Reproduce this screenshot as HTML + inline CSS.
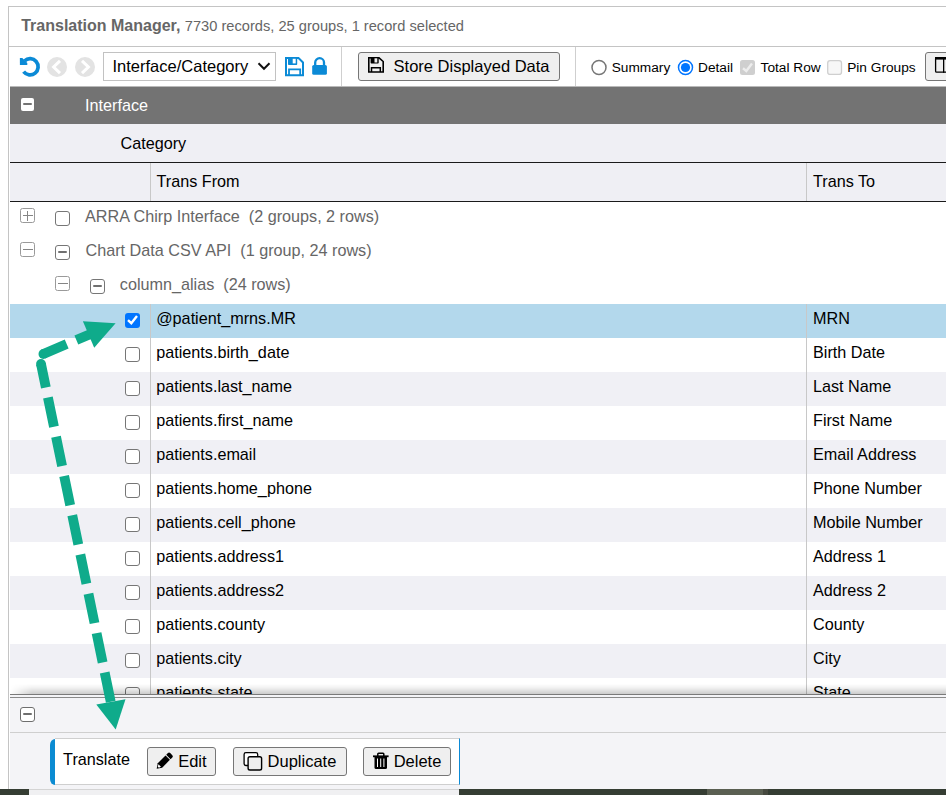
<!DOCTYPE html>
<html><head><meta charset="utf-8">
<style>
*{box-sizing:border-box;margin:0;padding:0}
html,body{width:946px;height:795px;overflow:hidden;background:#fff;font-family:"Liberation Sans",sans-serif;color:#000}
.a{position:absolute}
.t{white-space:pre;line-height:1}
.frame{left:8px;top:6px;width:1000px;height:800px;border-left:1px solid #c4c4c4;border-top:1px solid #c4c4c4}
.title{left:9px;top:7px;width:1000px;height:40px;border-bottom:1px solid #c4c4c4}
.hdr{left:10px;top:86px;width:940px;height:38px;background:#737373;border-top:1px solid #b9b9b9}
.cat{left:10px;top:124px;width:940px;height:38px;background:#efeff4}
.colh{left:10px;top:162px;width:940px;height:40px;background:#efeff4;border-top:1px solid #1a1a1a;border-bottom:1px solid #1a1a1a}
.row{left:10px;width:940px;height:34px}
.sel{background:#b3d8ec}
.alt{background:#f0f0f5}
.vd{width:1px;background:#c8c8c8}
.cb{width:15px;height:15px;border:1.5px solid #767676;border-radius:3px;background:#fff}
.cbc{width:15px;height:15px;border-radius:3px;background:#0075ff}
.tog{width:15px;height:15px;border:1px solid #9a9a9a;border-radius:2.5px}
.btn{border:1px solid #767676;border-radius:3px;background:#efefef}
.sep{width:1px;background:#cfcfcf}
</style></head><body>
<div class="a frame"></div>
<div class="a title"></div>
<div class="a t" style="left:21.2px;top:17.5px;font-size:16px;color:#666"><b>Translation Manager,</b> <span style="font-size:14.65px">7730 records, 25 groups, 1 record selected</span></div>
<svg class="a" style="left:0;top:0" width="946" height="90">
<path d="M23.6 71.7 A8.1 8.1 0 1 0 24.58 60.78" fill="none" stroke="#0b8ad6" stroke-width="3.7"/>
<path d="M19.9 57.9 L22.3 57.9 L27.3 63 L27.3 64.9 L19.9 64.9 Z" fill="#0b8ad6"/>
<circle cx="57" cy="67" r="10" fill="#e3e3e3"/>
<path d="M60 60.8 L53.6 67 L60 73.2" fill="none" stroke="#fff" stroke-width="3"/>
<circle cx="85" cy="67" r="10" fill="#e3e3e3"/>
<path d="M82 60.8 L88.4 67 L82 73.2" fill="none" stroke="#fff" stroke-width="3"/>
<!-- blue floppy -->
<path d="M286 58 H298.5 L303 62.5 V75.2 H286 Z" fill="none" stroke="#0b8ad6" stroke-width="2"/>
<rect x="288" y="58" width="9.2" height="7" rx="0.8" fill="#0b8ad6"/>
<rect x="292.7" y="58.8" width="3" height="4.6" fill="#fff"/>
<path d="M289 75.2 V69.3 H300.2 V75.2" fill="none" stroke="#0b8ad6" stroke-width="1.8"/>
<!-- lock -->
<path d="M315.2 65 V62.6 A4.4 4.4 0 0 1 324 62.6 V65" fill="none" stroke="#0b8ad6" stroke-width="2.3"/>
<rect x="312.2" y="64.9" width="14.7" height="9.9" rx="1.6" fill="#0b8ad6"/>
</svg>
<div class="a" style="left:103px;top:52px;width:173px;height:29px;border:1px solid #c2c2c2;background:#fff"></div>
<div class="a t" style="left:112.5px;top:57.72px;font-size:16.5px;">Interface/Category</div>
<svg class="a" style="left:255px;top:60px" width="16" height="12"><path d="M3.5 3.3 L9 8.8 L14.5 3.3" fill="none" stroke="#111" stroke-width="2"/></svg>
<div class="a sep" style="left:341px;top:47px;height:39px"></div>
<div class="a btn" style="left:358px;top:52px;width:202px;height:29px"></div>
<svg class="a" style="left:0;top:0" width="946" height="90">
<path d="M368.8 57.8 H379 L383.2 61.5 V72 H368.8 Z" fill="none" stroke="#000" stroke-width="1.6"/>
<rect x="370.6" y="57.5" width="8.1" height="6" rx="0.8" fill="#000"/>
<rect x="374.5" y="58.3" width="2.8" height="4.2" fill="#efefef"/>
<path d="M371.5 72 V67.8 H380.3 V72" fill="none" stroke="#000" stroke-width="1.5"/>
</svg>
<div class="a t" style="left:393.6px;top:57.72px;font-size:16.5px;">Store Displayed Data</div>
<div class="a sep" style="left:575px;top:47px;height:39px"></div>
<svg class="a" style="left:0;top:0" width="946" height="90">
<circle cx="599" cy="67.5" r="7" fill="#fff" stroke="#767676" stroke-width="1.5"/>
<circle cx="685.5" cy="67.5" r="7" fill="#fff" stroke="#0075ff" stroke-width="1.5"/>
<circle cx="685.5" cy="67.5" r="4.6" fill="#0075ff"/>
<rect x="740" y="60" width="15" height="15" rx="2.5" fill="#cfcfcf"/>
<path d="M743 68.3 L746.3 71 L752 63.5" fill="none" stroke="#ededed" stroke-width="2.4"/>
<rect x="827.7" y="60.6" width="13.8" height="13.8" rx="2.5" fill="#f7f7f7" stroke="#cfcfcf" stroke-width="1.3"/>
</svg>
<div class="a t" style="left:611.7px;top:61.30px;font-size:13.7px;">Summary</div>
<div class="a t" style="left:698px;top:61.30px;font-size:13.7px;">Detail</div>
<div class="a t" style="left:760.6px;top:61.30px;font-size:13.7px;">Total Row</div>
<div class="a t" style="left:847.2px;top:61.30px;font-size:13.7px;">Pin Groups</div>
<div class="a btn" style="left:925px;top:52px;width:60px;height:29px"></div>
<svg class="a" style="left:0;top:0" width="946" height="90"><rect x="935.6" y="57.6" width="20" height="14.6" rx="1" fill="none" stroke="#000" stroke-width="1.3"/><rect x="935" y="57" width="20" height="2.6" fill="#000"/><rect x="943" y="57" width="1.3" height="15.8" fill="#000"/></svg>
<div class="a hdr"></div>
<div class="a cat"></div>
<div class="a colh"></div>
<div class="a vd" style="left:150px;top:163px;height:38px"></div>
<div class="a vd" style="left:806px;top:163px;height:38px"></div>
<div class="a" style="left:21px;top:98px;width:13px;height:13px;background:#fff;border-radius:2px"><div class="a" style="left:2px;top:5.4px;width:9px;height:2px;border-radius:1px;background:#737373"></div></div>
<div class="a t" style="left:85px;top:97.48px;font-size:16.2px;color:#fff;">Interface</div>
<div class="a t" style="left:120.5px;top:135.48px;font-size:16.2px;">Category</div>
<div class="a t" style="left:156.5px;top:173.28px;font-size:16.2px;">Trans From</div>
<div class="a t" style="left:813px;top:173.28px;font-size:16.2px;">Trans To</div>
<div class="a tog" style="left:20px;top:208px"><div class="a" style="left:1.6px;top:5.9px;width:10px;height:1.3px;background:#858585"></div><div class="a" style="left:6px;top:2px;width:1.3px;height:9.5px;background:#858585"></div></div>
<div class="a cb" style="left:55px;top:211px"></div>
<div class="a t" style="left:85px;top:208.08px;font-size:16.2px;color:#666;">ARRA Chirp Interface  (2 groups, 2 rows)</div>
<div class="a tog" style="left:20px;top:242px"><div class="a" style="left:1.6px;top:5.9px;width:10px;height:1.3px;background:#858585"></div></div>
<div class="a cb" style="left:55px;top:245px"><div class="a" style="left:1.6px;top:5.3px;width:9px;height:2.2px;border-radius:1.1px;background:#707070"></div></div>
<div class="a t" style="left:85.5px;top:242.08px;font-size:16.2px;color:#666;">Chart Data CSV API  (1 group, 24 rows)</div>
<div class="a tog" style="left:55px;top:276px"><div class="a" style="left:1.6px;top:5.9px;width:10px;height:1.3px;background:#858585"></div></div>
<div class="a cb" style="left:90px;top:279px"><div class="a" style="left:1.6px;top:5.3px;width:9px;height:2.2px;border-radius:1.1px;background:#707070"></div></div>
<div class="a t" style="left:119.8px;top:276.08px;font-size:16.2px;color:#666;">column_alias  (24 rows)</div>
<div class="a row sel" style="top:304px"></div>
<div class="a vd" style="left:150px;top:304px;height:34px"></div>
<div class="a vd" style="left:806px;top:304px;height:34px"></div>
<div class="a cbc" style="left:125px;top:313px"><svg class="a" style="left:0;top:0" width="15" height="15" viewBox="0 0 15 15"><path d="M3 7.2 L6.3 10.2 L12 3" fill="none" stroke="#fff" stroke-width="2.4" stroke-linecap="butt" stroke-linejoin="miter"/></svg></div>
<div class="a t" style="left:156.2px;top:310.08px;font-size:16.2px;">@patient_mrns.MR</div>
<div class="a t" style="left:813px;top:310.08px;font-size:16.2px;">MRN</div>
<div class="a row " style="top:338px"></div>
<div class="a vd" style="left:150px;top:338px;height:34px"></div>
<div class="a vd" style="left:806px;top:338px;height:34px"></div>
<div class="a cb" style="left:125px;top:347px"></div>
<div class="a t" style="left:156.2px;top:344.08px;font-size:16.2px;">patients.birth_date</div>
<div class="a t" style="left:813px;top:344.08px;font-size:16.2px;">Birth Date</div>
<div class="a row alt" style="top:372px"></div>
<div class="a vd" style="left:150px;top:372px;height:34px"></div>
<div class="a vd" style="left:806px;top:372px;height:34px"></div>
<div class="a cb" style="left:125px;top:381px"></div>
<div class="a t" style="left:156.2px;top:378.08px;font-size:16.2px;">patients.last_name</div>
<div class="a t" style="left:813px;top:378.08px;font-size:16.2px;">Last Name</div>
<div class="a row " style="top:406px"></div>
<div class="a vd" style="left:150px;top:406px;height:34px"></div>
<div class="a vd" style="left:806px;top:406px;height:34px"></div>
<div class="a cb" style="left:125px;top:415px"></div>
<div class="a t" style="left:156.2px;top:412.08px;font-size:16.2px;">patients.first_name</div>
<div class="a t" style="left:813px;top:412.08px;font-size:16.2px;">First Name</div>
<div class="a row alt" style="top:440px"></div>
<div class="a vd" style="left:150px;top:440px;height:34px"></div>
<div class="a vd" style="left:806px;top:440px;height:34px"></div>
<div class="a cb" style="left:125px;top:449px"></div>
<div class="a t" style="left:156.2px;top:446.08px;font-size:16.2px;">patients.email</div>
<div class="a t" style="left:813px;top:446.08px;font-size:16.2px;">Email Address</div>
<div class="a row " style="top:474px"></div>
<div class="a vd" style="left:150px;top:474px;height:34px"></div>
<div class="a vd" style="left:806px;top:474px;height:34px"></div>
<div class="a cb" style="left:125px;top:483px"></div>
<div class="a t" style="left:156.2px;top:480.08px;font-size:16.2px;">patients.home_phone</div>
<div class="a t" style="left:813px;top:480.08px;font-size:16.2px;">Phone Number</div>
<div class="a row alt" style="top:508px"></div>
<div class="a vd" style="left:150px;top:508px;height:34px"></div>
<div class="a vd" style="left:806px;top:508px;height:34px"></div>
<div class="a cb" style="left:125px;top:517px"></div>
<div class="a t" style="left:156.2px;top:514.08px;font-size:16.2px;">patients.cell_phone</div>
<div class="a t" style="left:813px;top:514.08px;font-size:16.2px;">Mobile Number</div>
<div class="a row " style="top:542px"></div>
<div class="a vd" style="left:150px;top:542px;height:34px"></div>
<div class="a vd" style="left:806px;top:542px;height:34px"></div>
<div class="a cb" style="left:125px;top:551px"></div>
<div class="a t" style="left:156.2px;top:548.08px;font-size:16.2px;">patients.address1</div>
<div class="a t" style="left:813px;top:548.08px;font-size:16.2px;">Address 1</div>
<div class="a row alt" style="top:576px"></div>
<div class="a vd" style="left:150px;top:576px;height:34px"></div>
<div class="a vd" style="left:806px;top:576px;height:34px"></div>
<div class="a cb" style="left:125px;top:585px"></div>
<div class="a t" style="left:156.2px;top:582.08px;font-size:16.2px;">patients.address2</div>
<div class="a t" style="left:813px;top:582.08px;font-size:16.2px;">Address 2</div>
<div class="a row " style="top:610px"></div>
<div class="a vd" style="left:150px;top:610px;height:34px"></div>
<div class="a vd" style="left:806px;top:610px;height:34px"></div>
<div class="a cb" style="left:125px;top:619px"></div>
<div class="a t" style="left:156.2px;top:616.08px;font-size:16.2px;">patients.county</div>
<div class="a t" style="left:813px;top:616.08px;font-size:16.2px;">County</div>
<div class="a row alt" style="top:644px"></div>
<div class="a vd" style="left:150px;top:644px;height:34px"></div>
<div class="a vd" style="left:806px;top:644px;height:34px"></div>
<div class="a cb" style="left:125px;top:653px"></div>
<div class="a t" style="left:156.2px;top:650.08px;font-size:16.2px;">patients.city</div>
<div class="a t" style="left:813px;top:650.08px;font-size:16.2px;">City</div>
<div class="a row " style="top:678px"></div>
<div class="a vd" style="left:150px;top:678px;height:34px"></div>
<div class="a vd" style="left:806px;top:678px;height:34px"></div>
<div class="a cb" style="left:125px;top:687px"></div>
<div class="a t" style="left:156.2px;top:684.08px;font-size:16.2px;">patients.state</div>
<div class="a t" style="left:813px;top:684.08px;font-size:16.2px;">State</div>
<div class="a" style="left:10px;top:684px;width:940px;height:10px;background:linear-gradient(rgba(0,0,0,0),rgba(0,0,0,0.06) 40%,rgba(0,0,0,0.2));-webkit-mask-image:linear-gradient(to right,transparent,#000 22px)"></div>
<div class="a" style="left:10px;top:694px;width:940px;height:95px;background:#f4f4f7;border-top:1px solid #7a7a7a"></div>
<div class="a" style="left:10px;top:697px;width:940px;height:1px;background:#8a8a8a"></div>
<div class="a" style="left:20px;top:707px;width:15px;height:15px;border:1.5px solid #6e6e6e;border-radius:3px;background:#fff"><div class="a" style="left:2.2px;top:5.4px;width:8.8px;height:2px;border-radius:1px;background:#6e6e6e"></div></div>
<div class="a" style="left:10px;top:732px;width:940px;height:1px;background:#cfcfcf"></div>
<div class="a" style="left:55px;top:738px;width:405px;height:47px;background:#fff;border:1px solid #cfcfcf;border-left:none;border-right:1px solid #0b8ad6"></div><div class="a" style="left:50px;top:738.5px;width:5px;height:46px;background:#0b8bd2;border-radius:5px 0 0 5px / 6px 0 0 6px"></div>
<div class="a t" style="left:63.1px;top:751.18px;font-size:16.2px;">Translate</div>
<div class="a btn" style="left:147px;top:747px;width:69px;height:29px"></div>
<div class="a btn" style="left:233px;top:747px;width:114px;height:28.5px"></div>
<div class="a btn" style="left:363px;top:747px;width:88px;height:28.5px"></div>
<div class="a t" style="left:178.2px;top:753.02px;font-size:16.5px;">Edit</div>
<div class="a t" style="left:267.6px;top:753.02px;font-size:16.5px;">Duplicate</div>
<div class="a t" style="left:393.7px;top:753.02px;font-size:16.5px;">Delete</div>
<svg class="a" style="left:0;top:740px" width="946" height="40" viewBox="0 740 946 40">
<g transform="translate(156.7 768.7) rotate(-45)">
<path d="M0 0 L4.6 -3.1 H15.6 V3.1 H4.6 Z" fill="#000"/>
<path d="M2.2 -0.6 L4.4 -2 V1.6 L2.2 0.9 Z" fill="#fff"/>
<path d="M16.6 -3.1 H19 Q20.6 -3.1 20.6 -1.5 V1.5 Q20.6 3.1 19 3.1 H16.6 Z" fill="#000"/>
</g>
<rect x="244.1" y="752.7" width="13.6" height="12.8" rx="1.8" fill="#fff" stroke="#000" stroke-width="1.3"/>
<rect x="248.1" y="756.7" width="13.5" height="13.3" rx="1.8" fill="#efefef" stroke="#000" stroke-width="1.4"/>
<path d="M373 756.3 H388.6" stroke="#000" stroke-width="1.8"/>
<path d="M377.8 756.3 V754 Q377.8 753.2 378.6 753.2 H383 Q383.8 753.2 383.8 754 V756.3" fill="none" stroke="#000" stroke-width="1.5"/>
<path d="M374.5 756.5 H387 V767.5 Q387 769 385.5 769 H376 Q374.5 769 374.5 767.5 Z" fill="#000"/>
<rect x="377" y="758.5" width="1" height="8.5" fill="#fff"/>
<rect x="380.2" y="758.5" width="1" height="8.5" fill="#fff"/>
<rect x="383.4" y="758.5" width="1" height="8.5" fill="#fff"/>
</svg>
<div class="a" style="left:0;top:789px;width:946px;height:6px;background:#353d33"></div>
<div class="a" style="left:29px;top:789px;width:430px;height:6px;background:#f0f0f2;border-top:1px solid #d4d4d4"></div>
<div class="a" style="left:707px;top:789px;width:56px;height:6px;background:#5a5f52"></div>
<div class="a" style="left:763px;top:789px;width:5px;height:6px;background:#46493f"></div>
<svg class="a" style="left:0;top:0" width="946" height="795">
<g fill="#0fab8b" stroke="none">
<circle cx="43.4" cy="354" r="4.9"/>
<circle cx="41" cy="364" r="4.9"/>
</g>
<path d="M43.4 354 L90 334.2" stroke="#0fab8b" stroke-width="9.8" stroke-dasharray="29.9 10.5" stroke-dashoffset="4.6" fill="none"/>
<path d="M115.6 323.2 L82.9 321.3 L94.2 347.7 Z" fill="#0fab8b"/>
<path d="M41 364 L110.9 702.5" stroke="#0fab8b" stroke-width="9.8" stroke-dasharray="29.9 10.2" stroke-dashoffset="5.9" fill="none"/>
<path d="M115.7 729.4 L96.3 704.5 L125.5 699.3 Z" fill="#0fab8b"/>
</svg>
</body></html>
